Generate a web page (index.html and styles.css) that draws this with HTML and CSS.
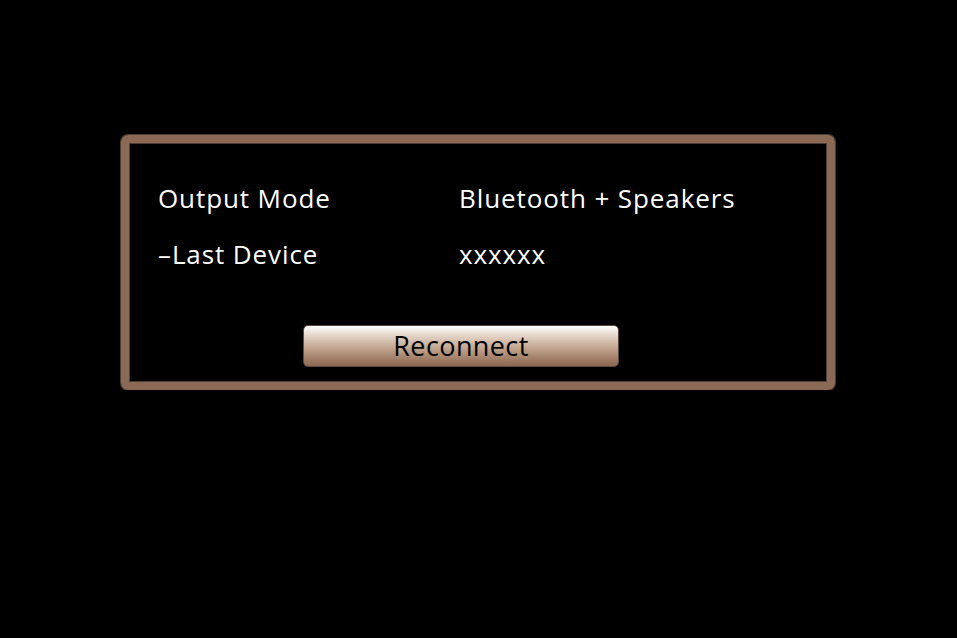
FILE: index.html
```html
<!DOCTYPE html>
<html lang="en">
<head>
    <meta charset="UTF-8">
    <title>Output Mode</title>
    <link rel="stylesheet" href="styles.css">
</head>
<body>

<div class="panel">
    <div class="settings">
        <div class="label">Output Mode</div>
        <div class="value">Bluetooth + Speakers</div>
        <div class="label">&#8211;Last Device</div>
        <div class="value">xxxxxx</div>
    </div>
    <button class="reconnect">Reconnect</button>
</div>

</body>
</html>
```

FILE: styles.css
```css
body {
    margin: 0;
    background-color: black;
    color: white;
    font-family: "Open Sans", "DejaVu Sans", sans-serif;
}
.panel {
    box-sizing: border-box;
    width: 714px;
    height: 255px;
    margin: 135px 0 0 121px;
    border: 8px solid #8b6a55;
    border-radius: 7px;
    box-shadow: 0 0 0 1px #4a3d35, inset 0 0 0 1px #4a3d35;
    padding: 37px 0 0 29px;
}
.settings {
    display: grid;
    grid-template-columns: 301px auto;
    row-gap: 20px;
    font-size: 26px;
    line-height: 36px;
    letter-spacing: 0.9px;
}
.reconnect {
    display: block;
    box-sizing: border-box;
    width: 316px;
    height: 42px;
    margin: 53px 0 0 145px;
    padding: 0 0 2px;
    border: 1px solid #5a4a40;
    border-radius: 5px;
    font-family: inherit;
    font-size: 27px;
    letter-spacing: 0.4px;
    color: black;
    background: linear-gradient(to bottom,
        #ffffff 0%, #f3ede7 10%, #e6d8cc 22%, #d4bfae 38%,
        #c1a590 55%, #ad8c75 72%, #99765f 88%, #8c6852 100%);
}
```
